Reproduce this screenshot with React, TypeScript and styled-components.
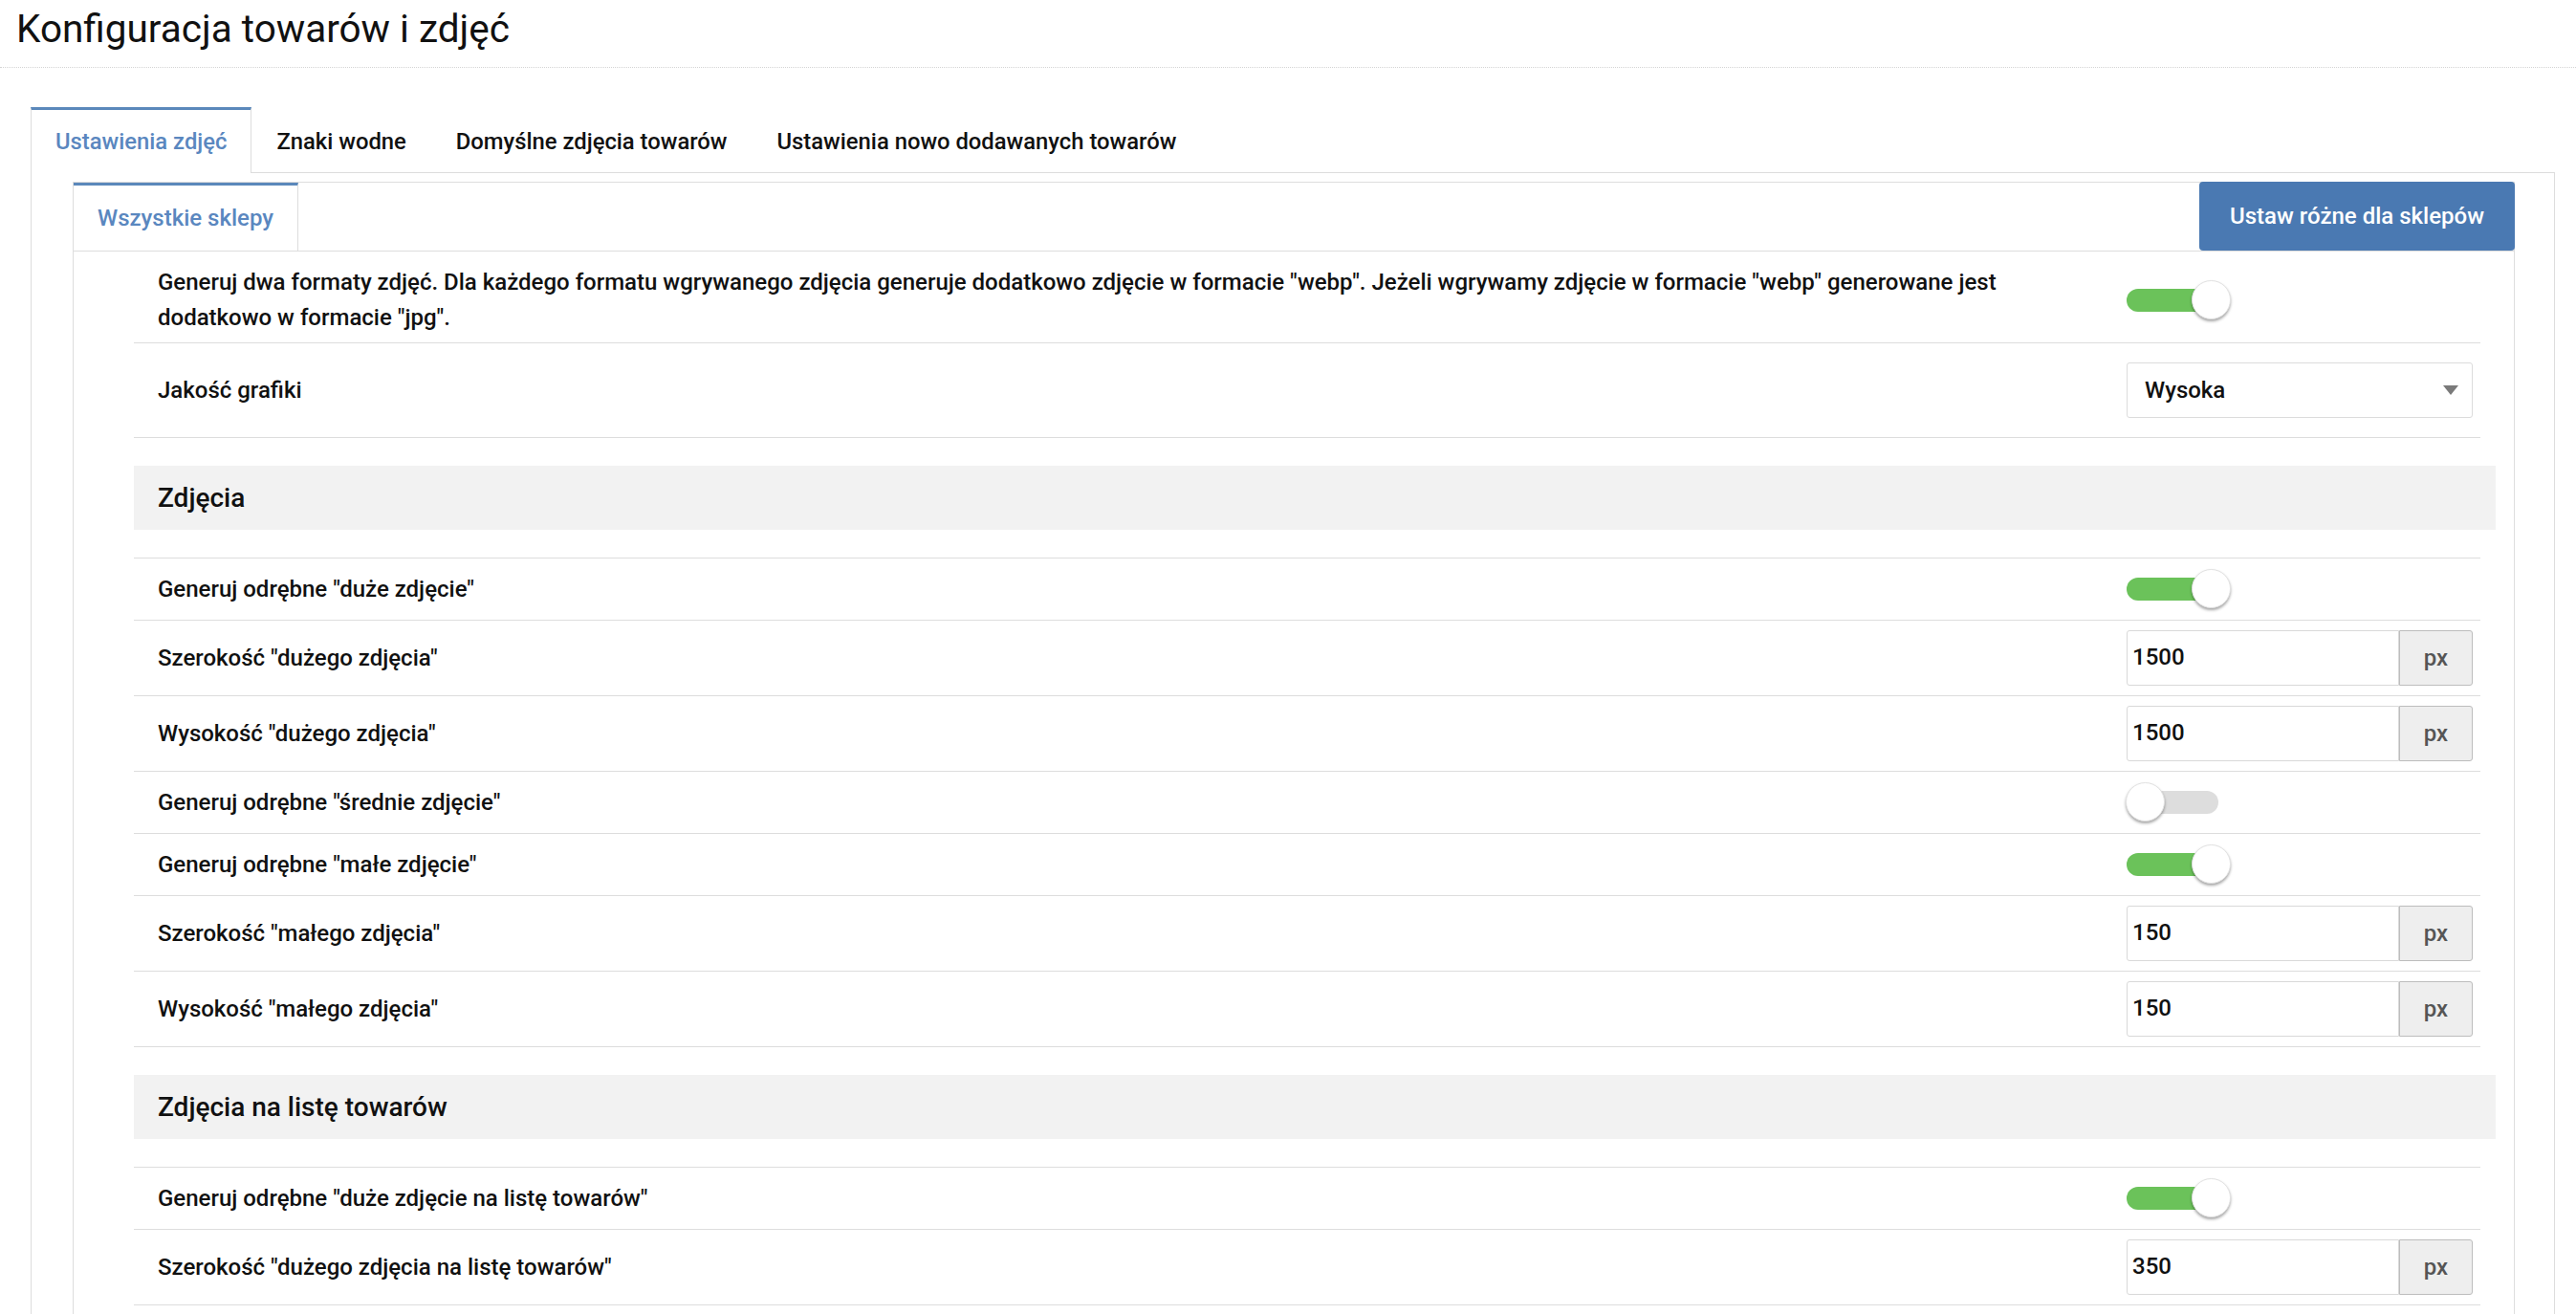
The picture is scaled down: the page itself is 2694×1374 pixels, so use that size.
import styled, { createGlobalStyle } from "styled-components"

const GlobalStyle = createGlobalStyle`
    html, body {
        margin: 0;
        padding: 0;
        background: #fff;
        font-family: Roboto, "Liberation Sans", Arial, sans-serif;
        color: #111;
    }
    * { box-sizing: border-box; }
`

const PageHeader = styled.div`
    height: 71px;
    padding: 8px 17px 0;
    border-bottom: 1px dotted #d4d4d4;
`
const Title = styled.h1`
    margin: 0;
    font-size: 40.5px;
    font-weight: 400;
    line-height: 44px;
    color: #111;
`
const Wrapper = styled.div`
    margin: 41px 22px 0 32px;
`
const TabStrip = styled.div`
    display: flex;
    align-items: flex-start;
    border-bottom: 1px solid #dddddd;
`
const Tab = styled.div<{ $active?: boolean }>`
    height: ${p => p.$active ? "69px" : "68px"};
    padding: 0 25px;
    display: flex;
    align-items: center;
    font-size: 23.8px;
    font-weight: 500;
    white-space: nowrap;
    color: ${p => p.$active ? "#5a87bf" : "#111"};
    background: ${p => p.$active ? "#fff" : "transparent"};
    border-top: 3px solid ${p => p.$active ? "#5b88bb" : "transparent"};
    border-left: 1px solid ${p => p.$active ? "#dddddd" : "transparent"};
    border-right: 1px solid ${p => p.$active ? "#dddddd" : "transparent"};
    margin-bottom: ${p => p.$active ? "-1px" : "0"};
`
const OuterBody = styled.div`
    border-left: 1px solid #dddddd;
    border-right: 1px solid #dddddd;
    padding: 9px 41px 0 43px;
`
const InnerPanel = styled.div`
    border-left: 1px solid #dddddd;
    border-right: 1px solid #dddddd;
`
const InnerHeader = styled.div`
    display: flex;
    justify-content: space-between;
    align-items: flex-start;
    height: 73px;
    border-top: 1px solid #dddddd;
    border-bottom: 1px solid #dddddd;
`
const ShopTab = styled.div`
    height: 71px;
    padding: 0 25px;
    display: flex;
    align-items: center;
    font-size: 24px;
    font-weight: 500;
    color: #5a87bf;
    border-top: 3px solid #5b88bb;
    border-right: 1px solid #dddddd;
`
const ShopButton = styled.button`
    height: 72px;
    margin-top: -1px;
    margin-right: -1px;
    padding: 0 32px;
    border: none;
    border-radius: 4px;
    background: #4a79b2;
    color: #fff;
    font-family: inherit;
    font-size: 24px;
    font-weight: 500;
    cursor: pointer;
`
const Content = styled.div`
    padding: 0 19px 40px 63px;
`
const Group = styled.div<{ $first?: boolean }>`
    margin-right: 16px;
    border-top: ${p => p.$first ? "none" : "1px solid #dddddd"};
`
const Row = styled.div<{ $padTop?: number, $padBottom?: number }>`
    display: grid;
    grid-template-columns: 1fr 362px;
    column-gap: 100px;
    align-items: center;
    padding: ${p => p.$padTop ?? 10}px 8px ${p => p.$padBottom ?? 10}px 25px;
    border-bottom: 1px solid #dddddd;
`
const Label = styled.div`
    font-size: 24px;
    font-weight: 500;
    line-height: 37px;
    color: #111;
`
const Section = styled.div`
    height: 67px;
    margin: 29px 0;
    padding-left: 25px;
    display: flex;
    align-items: center;
    background: #f2f2f2;
    font-size: 28px;
    font-weight: 500;
    color: #111;
`
const Switch = styled.div`
    position: relative;
    width: 109px;
    height: 44px;
`
const SwitchTrack = styled.div<{ $on: boolean }>`
    position: absolute;
    left: 0;
    top: 10px;
    width: 96px;
    height: 24px;
    border-radius: 12px;
    background: ${p => p.$on ? "#6bc25a" : "#dddddd"};
`
const SwitchKnob = styled.div<{ $on: boolean }>`
    position: absolute;
    top: 1px;
    left: ${p => p.$on ? "68px" : "-1px"};
    width: 41px;
    height: 41px;
    border-radius: 50%;
    background: #fff;
    border: 1px solid #e2e2e2;
    box-shadow: 0 2px 3px rgba(0, 0, 0, 0.35);
`
const InputGroup = styled.div`
    display: flex;
    height: 58px;
`
const NumberInput = styled.input`
    width: 285px;
    height: 58px;
    padding: 0 0 2px 5px;
    border: 1px solid #d9d9d9;
    border-radius: 3px 0 0 3px;
    font-family: inherit;
    font-size: 24px;
    font-weight: 500;
    color: #111;
    outline: none;
`
const Addon = styled.div`
    width: 77px;
    display: flex;
    align-items: center;
    justify-content: center;
    background: #eeeeee;
    border: 1px solid #bdbdbd;
    border-radius: 0 3px 3px 0;
    font-size: 24px;
    font-weight: 500;
    color: #555;
`
const SelectBox = styled.div`
    height: 58px;
    display: flex;
    align-items: center;
    justify-content: space-between;
    padding: 0 14px 0 18px;
    border: 1px solid #dcdcdc;
    border-radius: 3px;
    font-size: 24px;
    font-weight: 500;
    color: #111;
`
const Caret = styled.span`
    width: 0;
    height: 0;
    border-left: 8px solid transparent;
    border-right: 8px solid transparent;
    border-top: 10px solid #7a7a7a;
`

type Item =
    | { kind: "toggle", label: string, on: boolean }
    | { kind: "px", label: string, value: string }

const photos: Array<Item> = [
    { kind: "toggle", label: "Generuj odrębne \"duże zdjęcie\"", on: true },
    { kind: "px", label: "Szerokość \"dużego zdjęcia\"", value: "1500" },
    { kind: "px", label: "Wysokość \"dużego zdjęcia\"", value: "1500" },
    { kind: "toggle", label: "Generuj odrębne \"średnie zdjęcie\"", on: false },
    { kind: "toggle", label: "Generuj odrębne \"małe zdjęcie\"", on: true },
    { kind: "px", label: "Szerokość \"małego zdjęcia\"", value: "150" },
    { kind: "px", label: "Wysokość \"małego zdjęcia\"", value: "150" },
]

const listPhotos: Array<Item> = [
    { kind: "toggle", label: "Generuj odrębne \"duże zdjęcie na listę towarów\"", on: true },
    { kind: "px", label: "Szerokość \"dużego zdjęcia na listę towarów\"", value: "350" },
    { kind: "px", label: "Wysokość \"dużego zdjęcia na listę towarów\"", value: "350" },
    { kind: "toggle", label: "Generuj odrębne \"małe zdjęcie na listę towarów\"", on: true },
]

function Toggle({ on }: { on: boolean }) {
    return (
        <Switch>
            <SwitchTrack $on={on} />
            <SwitchKnob $on={on} />
        </Switch>
    )
}

function SettingRow({ item }: { item: Item }) {
    return (
        <Row>
            <Label>{item.label}</Label>
            {item.kind === "toggle" ?
                <Toggle on={item.on} />
                :
                <InputGroup>
                    <NumberInput defaultValue={item.value} />
                    <Addon>px</Addon>
                </InputGroup>
            }
        </Row>
    )
}

export default function App() {
    return (
        <>
            <GlobalStyle />
            <PageHeader>
                <Title>Konfiguracja towarów i zdjęć</Title>
            </PageHeader>
            <Wrapper>
                <TabStrip>
                    <Tab $active>Ustawienia zdjęć</Tab>
                    <Tab>Znaki wodne</Tab>
                    <Tab>Domyślne zdjęcia towarów</Tab>
                    <Tab>Ustawienia nowo dodawanych towarów</Tab>
                </TabStrip>
                <OuterBody>
                    <InnerPanel>
                        <InnerHeader>
                            <ShopTab>Wszystkie sklepy</ShopTab>
                            <ShopButton>Ustaw różne dla sklepów</ShopButton>
                        </InnerHeader>
                        <Content>
                            <Group $first>
                                <Row $padTop={14} $padBottom={7}>
                                    <Label>Generuj dwa formaty zdjęć. Dla każdego formatu wgrywanego zdjęcia generuje dodatkowo zdjęcie w formacie "webp". Jeżeli wgrywamy zdjęcie w formacie "webp" generowane jest dodatkowo w formacie "jpg".</Label>
                                    <Toggle on={true} />
                                </Row>
                                <Row $padTop={20} $padBottom={20}>
                                    <Label>Jakość grafiki</Label>
                                    <SelectBox>
                                        Wysoka
                                        <Caret />
                                    </SelectBox>
                                </Row>
                            </Group>
                            <Section>Zdjęcia</Section>
                            <Group>
                                {photos.map((item, index) => <SettingRow key={index} item={item} />)}
                            </Group>
                            <Section>Zdjęcia na listę towarów</Section>
                            <Group>
                                {listPhotos.map((item, index) => <SettingRow key={index} item={item} />)}
                            </Group>
                        </Content>
                    </InnerPanel>
                </OuterBody>
            </Wrapper>
        </>
    )
}
